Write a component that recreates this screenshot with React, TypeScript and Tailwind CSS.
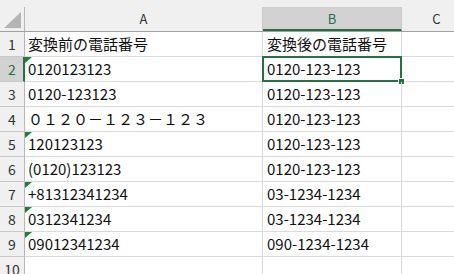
import React from "react";

type Row = { a: string; b: string; flag: boolean };

const rows: Row[] = [
  { a: "変換前の電話番号", b: "変換後の電話番号", flag: false },
  { a: "0120123123", b: "0120-123-123", flag: true },
  { a: "0120-123123", b: "0120-123-123", flag: false },
  { a: "０１２０－１２３－１２３", b: "0120-123-123", flag: false },
  { a: "120123123", b: "0120-123-123", flag: true },
  { a: "(0120)123123", b: "0120-123-123", flag: false },
  { a: "+81312341234", b: "03-1234-1234", flag: true },
  { a: "0312341234", b: "03-1234-1234", flag: true },
  { a: "09012341234", b: "090-1234-1234", flag: true },
  { a: "", b: "", flag: false },
];

const font = { fontFamily: '"Noto Sans CJK JP", "Noto Sans", sans-serif' };

function Flag() {
  return (
    <svg className="absolute left-0 top-0" width="7" height="6" viewBox="0 0 7 6">
      <polygon points="0,0 7,0 0,6" fill="#1a7f37" />
    </svg>
  );
}

export default function App() {
  return (
    <div
      className="w-[454px] h-[274px] overflow-hidden bg-white text-[#111]"
      style={font}
    >
      {/* column header */}
      <div className="flex h-[32px] bg-[#f0f0f0] border-b border-[#a0a0a0]">
        <div className="w-[25px] shrink-0 flex flex-col">
          <div className="h-[7px]" />
          <div className="flex-1 border-r border-[#b8b8b8] relative">
            <svg className="absolute left-[4px] top-[5px]" width="17" height="16" viewBox="0 0 17 16">
              <polygon points="17,0 17,16 0,16" fill="#b4b4b4" />
            </svg>
          </div>
        </div>
        <div className="w-[238px] shrink-0 flex flex-col">
          <div className="h-[7px]" />
          <div className="flex-1 border-r border-[#c8c8c8] flex items-center justify-center text-[13px] text-[#333]">
            A
          </div>
        </div>
        <div className="w-[139px] shrink-0 flex flex-col">
          <div className="h-[7px]" />
          <div className="flex-1 bg-[#d2d2d2] border-r border-[#c8c8c8] border-b-2 border-b-[#217346] flex items-center justify-center text-[13px] text-[#217346] pt-[2px]">
            B
          </div>
        </div>
        <div className="w-[70px] shrink-0 flex flex-col">
          <div className="h-[7px]" />
          <div className="flex-1 border-r border-[#c8c8c8] flex items-center justify-center text-[13px] text-[#333]">
            C
          </div>
        </div>
      </div>

      {rows.map((r, i) => {
        const n = i + 1;
        const sel = n === 2;
        return (
          <div key={n} className="flex h-[25px]">
            <div
              className={
                sel
                  ? "w-[25px] shrink-0 bg-[#d2d2d2] border-r-2 border-[#217346] border-b border-b-[#c8c8c8] flex items-center justify-center text-[14px] text-[#217346] pl-[1px]"
                  : "w-[25px] shrink-0 bg-[#f0f0f0] border-r border-[#b8b8b8] border-b border-b-[#c8c8c8] flex items-center justify-center text-[14px] text-[#333]"
              }
            >
              {n}
            </div>
            <div className="w-[238px] shrink-0 relative border-r border-b border-[#dadada] flex items-center pl-[3px] text-[15px] whitespace-nowrap overflow-hidden">
              {r.flag && <Flag />}
              {r.a}
            </div>
            <div className="w-[139px] shrink-0 relative border-r border-b border-[#dadada] flex items-center pl-[4px] text-[15px] whitespace-nowrap">
              {r.b}
              {sel && (
                <>
                  <div className="absolute left-[-1px] top-[-1px] right-[-1px] bottom-[-1px] border-2 border-[#217346]" />
                  <div className="absolute right-[-4px] bottom-[-4px] w-[7px] h-[7px] bg-[#217346] border border-white" />
                </>
              )}
            </div>
            <div className="w-[70px] shrink-0 border-r border-b border-[#dadada]" />
          </div>
        );
      })}
    </div>
  );
}
